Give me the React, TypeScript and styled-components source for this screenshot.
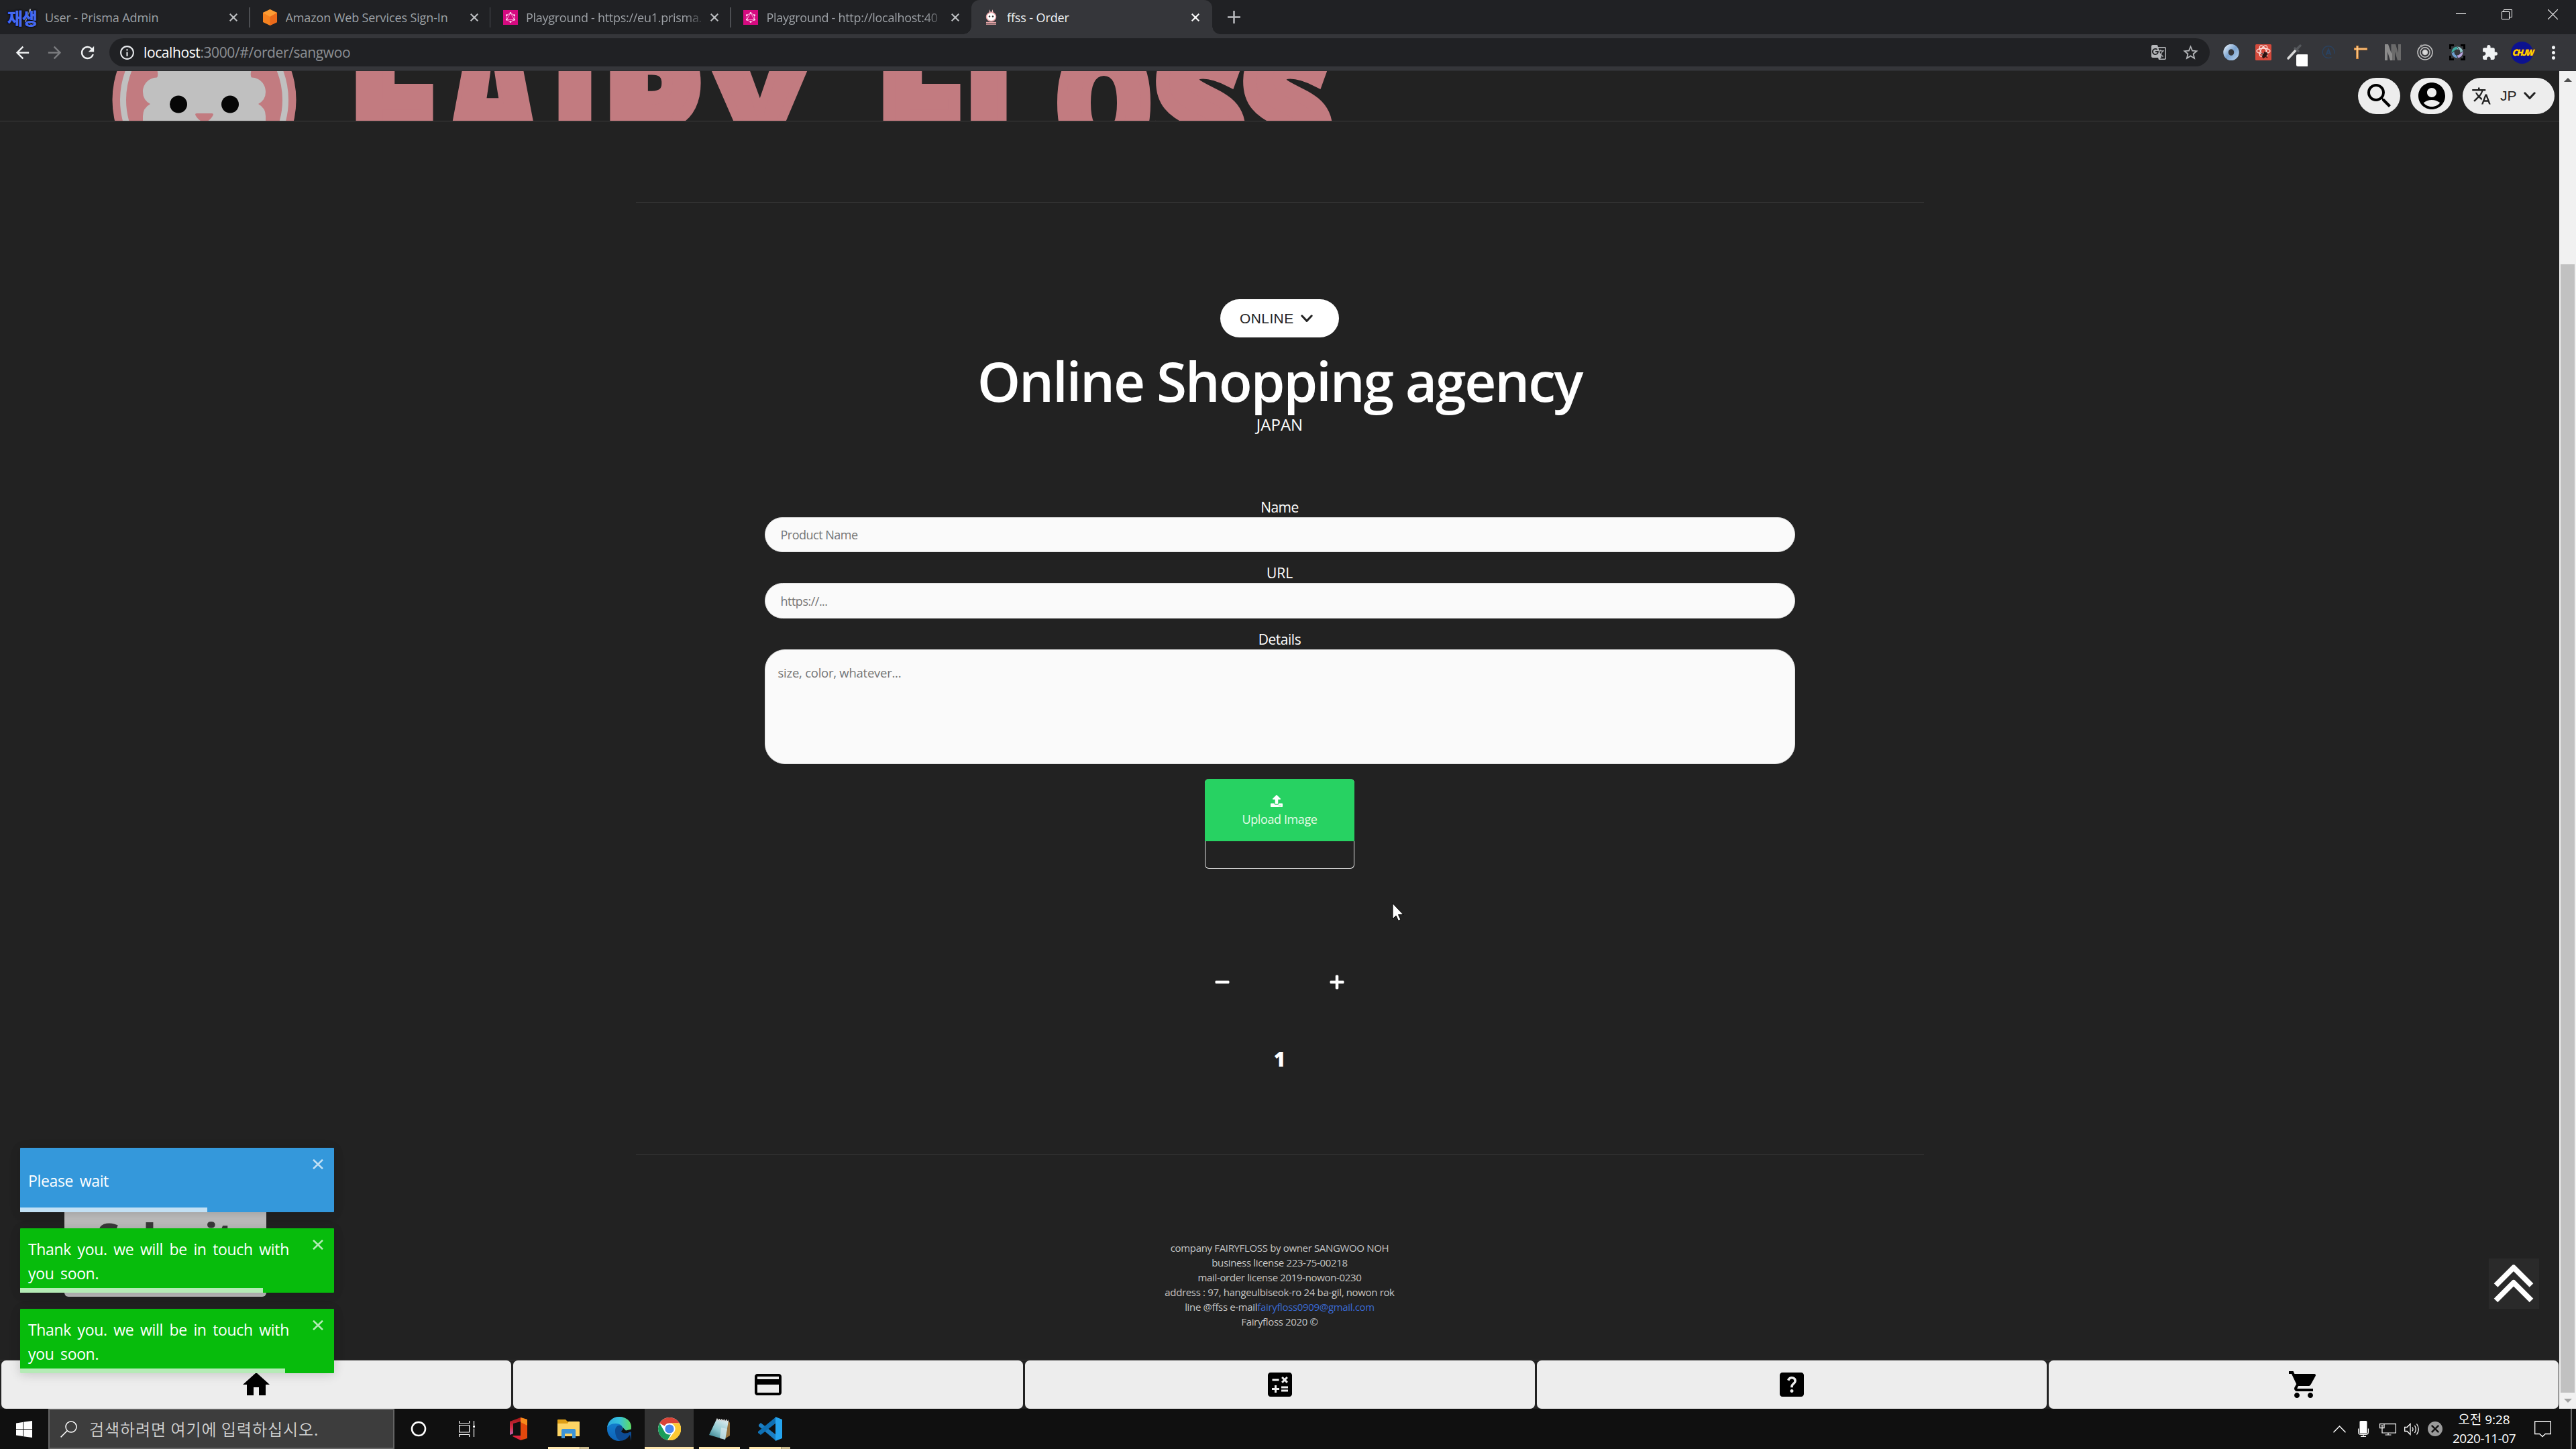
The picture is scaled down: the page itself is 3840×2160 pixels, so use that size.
import React from "react";
import styled, { createGlobalStyle, css } from "styled-components";
import {
  MdAccountCircle,
  MdArrowBack,
  MdArrowForward,
  MdCalculate,
  MdCreditCard,
  MdExtension,
  MdGTranslate,
  MdHelpCenter,
  MdHome,
  MdInfoOutline,
  MdMoreVert,
  MdRefresh,
  MdSearch,
  MdShoppingCart,
  MdStarOutline,
  MdTranslate,
} from "react-icons/md";
import { FaMinus, FaPlus, FaUpload } from "react-icons/fa";
import { SiGraphql } from "react-icons/si";

const ui = `"Open Sans", "Noto Sans CJK KR", sans-serif`;
const arial = `"Liberation Sans", "Noto Sans CJK KR", sans-serif`;

const GlobalStyle = createGlobalStyle`
  *, *::before, *::after { box-sizing: border-box; }
  body { margin: 0; background: #222; font-family: ${ui}; overflow: hidden; }
  svg { display: block; flex: none; }
`;

const Screen = styled.div`
  display: flex;
  flex-direction: column;
  width: 3840px;
  height: 2160px;
  overflow: hidden;
  position: relative;
`;

/* ---------- browser chrome ---------- */
const TabStrip = styled.div`
  display: flex;
  height: 51px;
  padding-left: 14px;
  background: #202124;
`;
const Tab = styled.div<{ $active?: boolean; $divider?: boolean }>`
  display: flex;
  align-items: center;
  width: 358.5px;
  height: 51px;
  padding-left: 18px;
  position: relative;
  font-size: 18px;
  letter-spacing: -0.12px;
  color: #9da1a6;
  &::after {
    content: "";
    position: absolute;
    right: 0;
    top: 11px;
    width: 1.5px;
    height: 30px;
    background: ${(p) => (p.$divider ? "#4c4e52" : "transparent")};
  }
  ${(p) =>
    p.$active &&
    css`
      color: #f1f3f4;
      background: #35363a;
      border-radius: 12px 12px 0 0;
      &::before {
        content: "";
        position: absolute;
        left: -12px;
        right: -12px;
        bottom: 0;
        height: 12px;
        background:
          radial-gradient(circle at 0 0, transparent 11.5px, #35363a 12px) left / 12px 12px no-repeat,
          radial-gradient(circle at 100% 0, transparent 11.5px, #35363a 12px) right / 12px 12px no-repeat;
      }
      &::after {
        display: none;
      }
    `}
`;
const Favicon = styled.div`
  display: flex;
  align-items: center;
  justify-content: center;
  width: 23px;
  height: 24px;
  margin-right: 12px;
`;
const PlayMark = styled.span`
  font: 900 25px/30px "Noto Sans CJK KR", sans-serif;
  color: #4468f0;
  letter-spacing: -1px;
  white-space: nowrap;
  text-shadow: 0 0 2px #000, 0 0 3px #000;
  position: absolute;
  left: -3px;
  top: 11px;
`;
const TabTitle = styled.span<{ $fade?: boolean }>`
  width: 263px;
  overflow: hidden;
  white-space: nowrap;
  line-height: 26px;
  ${(p) =>
    p.$fade &&
    css`
      letter-spacing: -0.28px;
      mask-image: linear-gradient(90deg, #000 90%, rgba(0, 0, 0, 0.15));
    `}
`;
const CloseIcon = styled.svg`
  margin-left: 12px;
`;
const NewTab = styled.div`
  display: flex;
  align-items: center;
  margin-left: 23px;
`;
const WindowControls = styled.div`
  display: flex;
  gap: 53px;
  padding-top: 14px;
  margin-left: auto;
  margin-right: 27px;
`;
const Toolbar = styled.div`
  display: flex;
  align-items: center;
  height: 55px;
  padding: 0 0 0 9px;
  background: #35363a;
  border-bottom: 1px solid #2b2c2f;
`;
const NavButton = styled.div<{ $dim?: boolean }>`
  display: flex;
  align-items: center;
  justify-content: center;
  width: 48.5px;
  font-size: 29px;
  color: ${(p) => (p.$dim ? "#7b7c7f" : "#f1f3f4")};
`;
const Omnibox = styled.div`
  display: flex;
  align-items: center;
  width: 3131px;
  height: 42px;
  margin-left: 8.5px;
  padding: 0 15px 0 14px;
  border-radius: 21px;
  background: #202124;
  color: #e8eaed;
`;
const Url = styled.span`
  margin-left: 12px;
  font-size: 21px;
  line-height: 30px;
  letter-spacing: -0.4px;
  color: #8d9095;
  b { font-weight: 400; color: #fff; }
`;
const OmniActions = styled.div`
  display: flex;
  align-items: center;
  gap: 22px;
  margin-left: auto;
  color: #b5b7ba;
`;
const Extensions = styled.div`
  display: flex;
  align-items: center;
  margin-left: 8px;
`;
const Slot = styled.div<{ $w?: number }>`
  display: flex;
  align-items: center;
  justify-content: center;
  width: ${(p) => p.$w ?? 48.2}px;
  height: 50px;
  position: relative;
`;
const Avatar = styled.div`
  display: flex;
  align-items: center;
  justify-content: center;
  width: 33px;
  height: 33px;
  border-radius: 50%;
  background: #0c1290;
  color: #ffe000;
  font: italic 900 12.5px/12px "Noto Sans CJK KR", sans-serif;
  letter-spacing: -1.6px;
  text-shadow: 0 0 1px #d00;
  white-space: nowrap;
`;

/* ---------- page ---------- */
const Viewport = styled.div`
  display: flex;
  height: 1994px;
  background: #222;
`;
const Page = styled.div`
  display: flex;
  flex-direction: column;
  width: 3815px;
  color: #fff;
`;
const Header = styled.header`
  display: flex;
  justify-content: space-between;
  height: 75px;
  border-bottom: 1px solid #3c3c3c;
  overflow: hidden;
`;
const Logo = styled.svg`
  width: 2100px;
  height: 74px;
`;
const HeaderActions = styled.div`
  display: flex;
  gap: 15px;
  padding: 10px 7px 0 0;
`;
const RoundButton = styled.button`
  display: flex;
  align-items: center;
  justify-content: center;
  width: 63px;
  height: 54px;
  padding: 0;
  border: 0;
  border-radius: 27px;
  background: #ededed;
  color: #000;
  font-size: 48px;
`;
const PillButton = styled.button<{ $w: number; $h: number; $pad: number; $bg: string }>`
  display: flex;
  align-items: center;
  width: ${(p) => p.$w}px;
  height: ${(p) => p.$h}px;
  padding: 0 0 0 ${(p) => p.$pad}px;
  border: 0;
  border-radius: 30px;
  background: ${(p) => p.$bg};
  color: #222;
  font: 21px/30px ${arial};
`;
const PillText = styled.span<{ $left?: number; $ls?: number }>`
  margin: 0 10px 0 ${(p) => p.$left ?? 0}px;
  letter-spacing: ${(p) => p.$ls ?? 0}px;
`;
const Main = styled.main`
  display: flex;
  flex-direction: column;
  align-items: center;
`;
const Rule = styled.hr<{ $top: number }>`
  width: 1920px;
  height: 1px;
  margin: ${(p) => p.$top}px 0 0;
  border: 0;
  background: #3a3a3a;
`;
const PillRow = styled.div`
  margin-top: 144px;
`;
const Title = styled.h1`
  margin: 14px 0 -2px;
  font-size: 82px;
  font-weight: 600;
  line-height: 100px;
  letter-spacing: -2.25px;
`;
const Country = styled.div`
  font-size: 24px;
  line-height: 36px;
`;
const Form = styled.form`
  display: flex;
  flex-direction: column;
  align-items: center;
  width: 1536px;
  margin-top: 90px;
`;
const Label = styled.label<{ $gap?: boolean; $ls?: number }>`
  margin-top: ${(p) => (p.$gap ? 16 : 0)}px;
  font-size: 21px;
  line-height: 30px;
  letter-spacing: ${(p) => p.$ls ?? 0}px;
`;
const field = css`
  width: 1536px;
  border: 1px solid #dedede;
  background: #fafafa;
  font-family: ${ui};
  outline: none;
  resize: none;
  &::placeholder { color: #757575; opacity: 1; }
`;
const Input = styled.input<{ $h: number }>`
  ${field}
  height: ${(p) => p.$h}px;
  padding: 0 23px;
  border-radius: 27px;
  font-size: 18px;
  letter-spacing: -0.5px;
`;
const TextArea = styled.textarea`
  ${field}
  display: block;
  height: 171px;
  padding: 20px 19px;
  border-radius: 30px;
  font-size: 18.5px;
  line-height: 27px;
  letter-spacing: -0.25px;
`;
const UploadBox = styled.div`
  width: 223px;
  height: 134px;
  margin-top: 22px;
  border: 1px solid #e6e6e6;
  border-top: 0;
  border-radius: 6px;
`;
const UploadButton = styled.div`
  display: flex;
  flex-direction: column;
  align-items: center;
  width: 223px;
  height: 93px;
  margin-left: -1px;
  padding-top: 24px;
  border-radius: 6px 6px 0 0;
  background: #27d262;
  color: #e6fbe9;
  font-size: 18px;
  line-height: 26px;
  letter-spacing: -0.4px;
  svg { margin: 0 9px 5px 0; color: #fff; }
`;
const Stepper = styled.div`
  display: flex;
  gap: 147px;
  margin-top: 157px;
  font-size: 24px;
`;
const Quantity = styled.div`
  margin-top: 83px;
  font-size: 30px;
  font-weight: 800;
  line-height: 40px;
`;
const Footer = styled.footer`
  margin-top: 127px;
  font-size: 15px;
  line-height: 22px;
  letter-spacing: -0.34px;
  color: #c6c6c6;
  text-align: center;
  a { color: #3a6ad4; text-decoration: none; }
`;
const BottomNav = styled.nav`
  display: flex;
  gap: 3px;
  height: 73px;
  margin-top: auto;
  padding: 0 1px 0 2px;
  border-top: 1px solid #3c3c3c;
`;
const NavItem = styled.div`
  display: flex;
  flex: 1;
  align-items: center;
  justify-content: center;
  border-radius: 7px;
  background: #ededed;
  color: #000;
  font-size: 48px;
`;
const Scrollbar = styled.div`
  display: flex;
  flex-direction: column;
  align-items: center;
  width: 25px;
  height: 1994px;
  background: #f1f1f1;
`;
const Arrow = styled.div<{ $down?: boolean }>`
  width: 0;
  height: 0;
  margin-top: ${(p) => (p.$down ? 9 : 10)}px;
  border: 6px solid transparent;
  border-top: ${(p) => (p.$down ? "6px solid #a3a3a3" : "0")};
  border-bottom: ${(p) => (p.$down ? "0" : "6px solid #505050")};
`;
const Thumb = styled.div`
  width: 21px;
  height: 1682px;
  margin-top: 272px;
  background: #c1c1c1;
`;

/* ---------- overlays ---------- */
const ToTop = styled.div`
  display: flex;
  position: absolute;
  left: 3710px;
  top: 1876px;
  width: 75px;
  height: 75px;
  background: #2a2a2a;
`;
const SubmitButton = styled.div`
  position: absolute;
  left: 96px;
  top: 1757px;
  width: 301px;
  height: 176px;
  border-radius: 6px;
  background: #bdbdbd;
  color: #3a3a3a;
  font-size: 57px;
  font-weight: 800;
  line-height: 172px;
  letter-spacing: -1px;
  text-align: center;
`;
const Toasts = styled.div`
  display: flex;
  flex-direction: column;
  gap: 24px;
  position: absolute;
  left: 30px;
  top: 1711px;
`;
const Toast = styled.div<{ $bg: string }>`
  display: flex;
  justify-content: space-between;
  align-items: center;
  width: 468px;
  height: 96px;
  padding: 1px 16px 0 12px;
  position: relative;
  border-radius: 1px;
  background: ${(p) => p.$bg};
  box-shadow: 0 1px 15px rgba(0, 0, 0, 0.12), 0 3px 22px rgba(0, 0, 0, 0.06);
  color: #fff;
  font-size: 23px;
  line-height: 36px;
`;
const ToastText = styled.div`
  width: 400px;
  word-spacing: 4px;
  letter-spacing: -0.35px;
`;
const ToastClose = styled.svg`
  align-self: flex-start;
  margin-top: 16px;
`;
const Progress = styled.div`
  position: absolute;
  left: 0;
  bottom: 0;
  height: 7px;
  background: rgba(255, 255, 255, 0.7);
`;
const Cursor = styled.svg`
  position: absolute;
  left: 2075px;
  top: 1345px;
`;

/* ---------- taskbar ---------- */
const Taskbar = styled.div`
  display: flex;
  height: 60px;
  background: #101010;
`;
const SearchBox = styled.div`
  display: flex;
  align-items: center;
  width: 516px;
  height: 60px;
  padding-left: 16px;
  border: 2px solid #646464;
  background: #3d3d3d;
  color: #d2d2d2;
  font: 350 24px/34px "Noto Sans CJK KR", sans-serif;
  letter-spacing: 0.95px;
  span { margin-left: 18px; white-space: nowrap; }
`;
const TaskSlot = styled.div<{ $w?: number; $active?: boolean; $ml?: number }>`
  display: flex;
  align-items: center;
  justify-content: center;
  width: ${(p) => p.$w ?? 75}px;
  height: 60px;
  margin-left: ${(p) => p.$ml ?? 0}px;
  position: relative;
  background: ${(p) => (p.$active ? "linear-gradient(#333, #333) center / 73px 60px no-repeat" : "none")};
`;
const Underline = styled.div<{ $w: number; $split?: boolean }>`
  position: absolute;
  bottom: 0;
  left: ${(p) => (75 - p.$w) / 2}px;
  width: ${(p) => p.$w}px;
  height: 3px;
  background: ${(p) => (p.$split ? "linear-gradient(90deg, #fce5ac 47px, #8f8467 47px, #8f8467 48px, #c9b98d 48px)" : "#fce5ac")};
`;
const Tray = styled.div`
  display: flex;
  margin-left: auto;
  color: #fff;
`;
const Clock = styled.div`
  width: 114px;
  padding-top: 2px;
  text-align: center;
  font-size: 19px;
  line-height: 28px;
`;
const ClockDate = styled.div`
  letter-spacing: -0.5px;
`;
const ShowDesktop = styled.div`
  width: 8px;
  height: 60px;
  border-left: 2px solid #6b6b6b;
`;

const TabClose = ({ color }: { color: string }) => (
  <CloseIcon width="12" height="12" viewBox="0 0 12 12" stroke={color} strokeWidth="2">
    <path d="M.7.7l10.6 10.6M11.3.7L.7 11.3" />
  </CloseIcon>
);
const Chevron = () => (
  <svg width="18" height="12" viewBox="0 0 18 12" fill="none" stroke="#222" strokeWidth="3" strokeLinecap="round" strokeLinejoin="round">
    <path d="M1.8 1.8L9 9.4l7.2-7.6" />
  </svg>
);
const GraphqlIcon = () => (
  <svg width="22" height="22" viewBox="0 0 22 22">
    <rect width="22" height="22" fill="#d60a80" />
    <g transform="translate(3 3)" color="#ffd9ef"><SiGraphql size={16} /></g>
  </svg>
);

/* wordmark letters: glyph, left, width, baseline, size, weight of the outline, family */
const letters: [string, number, number, number, number, number, string][] = [
  ["F", 530, 118, 237, 250, 22, "Inter"],
  ["A", 662, 146, 243, 320, 10, "Inter"],
  ["I", 829, 56, 242, 250, 14, "Inter"],
  ["R", 908, 136, 244, 250, 20, "Inter"],
  ["Y", 1058, 148, 275, 250, 16, "Inter"],
  ["F", 1316, 118, 237, 250, 22, "Inter"],
  ["L", 1445, 112, 246, 250, 18, "Inter"],
  ["O", 1577, 137, 244, 250, 20, "Inter"],
  ["S", 1722, 132, 250, 250, 22, "Noto Sans"],
  ["S", 1852, 132, 250, 250, 22, "Noto Sans"],
];

const BrandLogo = () => (
  <Logo viewBox="0 106 2100 74">
    <circle cx="304.5" cy="149" r="137" fill="#c27b80" />
    <circle cx="304.5" cy="149" r="121" fill="none" stroke="#c0c0c0" strokeWidth="9" />
    <path fill="#c0c0c0" d="M233 100Q237 112 234 115.500C221 116 213 126 213 137Q213 149 224 155Q213 161 213 173V182H396V173Q396 161 385 155Q396 149 396 137C396 126 388 116 375 115.500Q372 112 376 100Z" />
    <ellipse cx="266" cy="155.500" rx="13" ry="13" fill="#060606" />
    <ellipse cx="343" cy="155.500" rx="13" ry="13" fill="#060606" />
    <path fill="#c27b80" d="M293 169H316Q318 169 318 171Q313 181 305 182Q296 181 291 171Q291 169 293 169Z" />
    <g fill="#c27b80" stroke="#c27b80" fontWeight="900">
      {letters.map(([ch, x, w, y, size, outline, family], i) => (
        <text key={i} x={x} y={y} textLength={w} lengthAdjust="spacingAndGlyphs" fontSize={size} strokeWidth={outline} fontFamily={family}>{ch}</text>
      ))}
    </g>
  </Logo>
);

const RabbitIcon = () => (
  <svg width="17" height="23" viewBox="0 0 17 23">
    <path d="M4.500 8L6.500 0l1.500 5h1l1.500-5 2 8z" fill="#f3c6c6" />
    <ellipse cx="8.500" cy="11" rx="7" ry="6.500" fill="#fff" stroke="#e8a5a8" strokeWidth="1.500" />
    <circle cx="6" cy="10.500" r="1.200" fill="#333" /><circle cx="11" cy="10.500" r="1.200" fill="#333" />
    <path d="M1 19.500h15M1 22h15" stroke="#e8a5a8" strokeWidth="1.600" />
  </svg>
);

const ExtensionIcons = () => (
  <Extensions>
    <Slot>
      <svg width="24" height="24" viewBox="0 0 24 24">
        <defs><linearGradient id="ring" x2="1" y2="1"><stop stopColor="#cfe0f2" /><stop offset=".5" stopColor="#7ba3cf" /><stop offset="1" stopColor="#a9c6e6" /></linearGradient></defs>
        <ellipse cx="12" cy="12" rx="8" ry="8.500" fill="none" stroke="url(#ring)" strokeWidth="7.500" />
      </svg>
    </Slot>
    <Slot>
      <svg width="24" height="24" viewBox="0 0 24 24" fill="none">
        <rect width="24" height="24" rx="1.500" fill="#d54a3c" />
        <g stroke="#ffe3df" strokeWidth="1.300">
          <ellipse cx="12" cy="10" rx="10" ry="4" />
          <ellipse cx="12" cy="10" rx="9" ry="4" transform="rotate(60 12 10)" />
          <ellipse cx="12" cy="10" rx="9" ry="4" transform="rotate(120 12 10)" />
        </g>
        <ellipse cx="14" cy="16" rx="3" ry="5" transform="rotate(35 14 16)" fill="#2b1311" />
        <path d="M9 13l9 7M10 19l9-5M14 11l-2 10" stroke="#2b1311" strokeWidth="1.300" />
      </svg>
    </Slot>
    <Slot>
      <svg width="36" height="42" viewBox="0 -3 36 42">
        <path d="M7 27l12-13" stroke="#d9d9d9" strokeWidth="3.500" strokeLinecap="round" />
        <path d="M17 12l5 4M20 13l5-5" stroke="#55585c" strokeWidth="3.500" strokeLinecap="round" />
        <rect x="19" y="21" width="18" height="18" rx="2.500" fill="#fff" />
      </svg>
    </Slot>
    <Slot>
      <svg width="20" height="20" viewBox="0 0 20 20" fill="none" stroke="#2a4260" strokeWidth="1.400">
        <path d="M14.500 17.200A8.800 8.800 0 1 1 18.500 12" />
        <path d="M6.500 14L10 5.500 13.500 14M8 11.500h4" strokeWidth="2" />
      </svg>
    </Slot>
    <Slot>
      <svg width="20" height="22" viewBox="0 0 20 22" stroke="#e8923c">
        <path d="M0 6h20M5 1v20" strokeWidth="3.500" />
        <path d="M1 6h18M5 2v17" stroke="#ffdfae" strokeWidth="1.200" />
      </svg>
    </Slot>
    <Slot>
      <svg width="24" height="24" viewBox="0 0 24 24">
        <path d="M0 0h5l5 14V0h3v24H8L4 11v13H0z" fill="#8b8b8b" />
        <path d="M11 0h5l4 13V0h4v24h-5l-4-13v13h-4z" fill="#6a6a6a" />
      </svg>
    </Slot>
    <Slot>
      <svg width="24" height="24" viewBox="0 0 24 24" fill="none" stroke="#c6c6c6" strokeWidth="1.500">
        <circle cx="12" cy="12" r="11" /><circle cx="12" cy="12" r="7.200" /><circle cx="12" cy="12" r="3.500" fill="#dadada" />
        <circle cx="6.500" cy="2.500" r="2" fill="#999" stroke="none" />
      </svg>
    </Slot>
    <Slot>
      <svg width="24" height="24" viewBox="0 0 24 24" fill="none">
        <path d="M1.500 7V1.500H7M17 1.500h5.500V7M22.500 17v5.500H17M7 22.500H1.500V17" stroke="#000" strokeWidth="3" />
        <path d="M12 5.500A6.500 6.500 0 0 1 18.500 12" stroke="#8fc5c9" strokeWidth="4" />
        <path d="M18.500 12A6.500 6.500 0 0 1 12 18.500" stroke="#b7a5de" strokeWidth="4" />
        <path d="M12 18.500A6.500 6.500 0 0 1 5.500 12" stroke="#6d9fd0" strokeWidth="4" />
        <path d="M5.500 12A6.500 6.500 0 0 1 12 5.500" stroke="#3fa79f" strokeWidth="4" />
        <path d="M12 4l4 6M20 11l-6 4M13 20l-4-6M4 13l5-4" stroke="#35363a" strokeWidth="1" />
      </svg>
    </Slot>
    <Slot><MdExtension size={25} color="#f1f3f4" /></Slot>
    <Slot><Avatar>CHJW</Avatar></Slot>
    <Slot $w={46}><MdMoreVert size={31} color="#f1f3f4" /></Slot>
  </Extensions>
);

const Chrome = () => (
  <>
    <TabStrip>
      <Tab $divider>
        <Favicon>
          <svg width="14" height="26" viewBox="0 0 14 26" fill="none" stroke="#dfe5ee" strokeWidth="1.300"><path d="M8 1L1 19l9 5 3-3z" /></svg>
          <PlayMark>재생</PlayMark>
        </Favicon>
        <TabTitle>User - Prisma Admin</TabTitle><TabClose color="#bfc1c4" />
      </Tab>
      <Tab $divider>
        <Favicon>
          <svg width="23" height="24" viewBox="0 0 23 24">
            <path d="M11.500 0L22 5v14l-10.500 5L1 19V5z" fill="#f58220" />
            <path d="M11.500 0L22 5l-10.500 6L1 5z" fill="#fb9c34" /><path d="M11.500 11L22 5v14l-10.500 5z" fill="#ea6a1b" />
          </svg>
        </Favicon>
        <TabTitle>Amazon Web Services Sign-In</TabTitle><TabClose color="#bfc1c4" />
      </Tab>
      <Tab $divider><Favicon><GraphqlIcon /></Favicon><TabTitle $fade>Playground - https://eu1.prisma.</TabTitle><TabClose color="#bfc1c4" /></Tab>
      <Tab><Favicon><GraphqlIcon /></Favicon><TabTitle $fade>Playground - http://localhost:40</TabTitle><TabClose color="#bfc1c4" /></Tab>
      <Tab $active><Favicon><RabbitIcon /></Favicon><TabTitle>ffss - Order</TabTitle><TabClose color="#fff" /></Tab>
      <NewTab><svg width="19" height="19" viewBox="0 0 19 19" stroke="#b9bbbe" strokeWidth="2.500"><path d="M0 9.500h19M9.500 0v19" /></svg></NewTab>
      <WindowControls>
        <svg width="15" height="15" viewBox="0 0 15 15" stroke="#fff"><path d="M0 6.500h15" /></svg>
        <svg width="16" height="15" viewBox="0 0 16 15" fill="none" stroke="#fff"><path d="M.5 3.500h11v11H.5zM3.500 3V.5h12v11H12" /></svg>
        <svg width="15" height="15" viewBox="0 0 15 15" stroke="#fff" strokeWidth="1.200"><path d="M0 0l15 15M15 0L0 15" /></svg>
      </WindowControls>
    </TabStrip>
    <Toolbar>
      <NavButton><MdArrowBack /></NavButton>
      <NavButton $dim><MdArrowForward /></NavButton>
      <NavButton><MdRefresh /></NavButton>
      <Omnibox>
        <MdInfoOutline size={25} />
        <Url><b>localhost</b>:3000/#/order/sangwoo</Url>
        <OmniActions><MdGTranslate size={24} /><MdStarOutline size={27} /></OmniActions>
      </Omnibox>
      <ExtensionIcons />
    </Toolbar>
  </>
);

const ToastItem = ({ bg, text, progress }: { bg: string; text: string; progress: number }) => (
  <Toast $bg={bg}>
    <ToastText>{text}</ToastText>
    <ToastClose width="16" height="15" viewBox="0 0 16 15" stroke="#fff" strokeOpacity=".7" strokeWidth="2.600">
      <path d="M1 .8l14 13.400M15 .8L1 14.200" />
    </ToastClose>
    <Progress style={{ width: progress }} />
  </Toast>
);

const TaskIcons = () => (
  <>
    <TaskSlot $w={72}><svg width="24" height="24" viewBox="0 0 24 24"><circle cx="12" cy="12" r="10" fill="none" stroke="#fff" strokeWidth="2.600" /></svg></TaskSlot>
    <TaskSlot $w={72}>
      <svg width="25" height="24" viewBox="0 0 25 24" fill="none" stroke="#fff" strokeWidth="1.200">
        <path d="M.6 0v3.500h15V0M.6 6.500h15v10.500h-15zM.6 24v-3.500h15V24M22.500 0v6M22.500 11.500V24" /><path d="M21 7h3v3h-3z" fill="#fff" stroke="none" />
      </svg>
    </TaskSlot>
    <TaskSlot $ml={3}>
      <svg width="28" height="34" viewBox="0 0 28 34">
        <defs><linearGradient id="of" x2="0" y2="1"><stop stopColor="#a01414" /><stop offset=".6" stopColor="#d8304a" /><stop offset="1" stopColor="#b765b0" /></linearGradient></defs>
        <path d="M17 0L1 6v20l5-2V9l11-3z" fill="url(#of)" /><path d="M17 0l10 3v28l-10 3V6z" fill="#e2480c" /><path d="M17 0l10 3v9L17 7z" fill="#f58a1b" />
        <path d="M6 27h11v7L5 28z" fill="#e0233e" />
      </svg>
    </TaskSlot>
    <TaskSlot>
      <svg width="33" height="28" viewBox="0 0 33 28">
        <path d="M0 1q0-1 1-1h11l3 3h17v6H0z" fill="#dd9e16" /><path d="M0 6h15l2-3h15q1 0 1 1v21H0z" fill="#fdd464" />
        <path d="M6 28V16q0-2 2-2h17q2 0 2 2v12h-5v-7H11v7z" fill="#3c94d8" />
      </svg>
      <Underline $w={61} $split />
    </TaskSlot>
    <TaskSlot>
      <svg width="36" height="36" viewBox="0 0 36 36">
        <defs>
          <linearGradient id="e1"><stop stopColor="#2aa7de" /><stop offset=".5" stopColor="#36c1dd" /><stop offset="1" stopColor="#5fdc60" /></linearGradient>
          <linearGradient id="e2" x2="0" y2="1"><stop stopColor="#1585d3" /><stop offset="1" stopColor="#0e63b8" /></linearGradient>
        </defs>
        <circle cx="18" cy="18" r="18" fill="url(#e2)" />
        <path d="M0 17C1 6 9 0 18 0c11 0 18 7 18 15 0 6-4 9-9 9-4 0-6-1-6-3 2-1 2-3 2-4 0-4-4-7-10-7C6 10 1 13 0 17z" fill="url(#e1)" />
        <path d="M12 21c0-6 4-9 8-8 2 1 3 2 3 4s-1 3-2 4c0 2 3 3 6 3 3 0 5-1 7-2l2 1v13H20c-5-2-8-8-8-15z" fill="#0d4b93" />
        <path d="M21 21c0 2 3 3.500 6 3.500 3 0 5-1 7-2l2 0v-4l-8 2-5-5c1 3 0 4-2 5.500zM34 27c-4 6-9 9-16 9h18z" fill="#101010" />
      </svg>
    </TaskSlot>
    <TaskSlot $active>
      <svg width="34" height="34" viewBox="0 0 34 34">
        <circle cx="17" cy="17" r="17" fill="#fff" />
        <path d="M17 0a17 17 0 0 1 14.700 8.500H17a8.500 8.500 0 0 0-7.400 4.300L2.300 8.500A17 17 0 0 1 17 0z" fill="#db4437" />
        <path d="M2.300 8.500l7.300 12.700A8.500 8.500 0 0 0 17 25.500l2-.2-5 8.400A17 17 0 0 1 2.300 8.500z" fill="#1a9d5a" />
        <path d="M31.700 8.500A17 17 0 0 1 14.500 34l9.900-12.800A8.500 8.500 0 0 0 17 8.500z" fill="#fcc934" />
        <circle cx="17" cy="17" r="8.300" fill="#fff" /><circle cx="17" cy="17" r="6.600" fill="#4a86ee" />
      </svg>
      <Underline $w={73} />
    </TaskSlot>
    <TaskSlot>
      <svg width="33" height="33" viewBox="0 0 33 33">
        <defs><linearGradient id="np" x1=".8" y1="0" x2=".2" y2="1"><stop stopColor="#dcebed" /><stop offset=".55" stopColor="#8cc7cf" /><stop offset="1" stopColor="#34808c" /></linearGradient></defs>
        <path d="M29 3l3 4v19l-8 5z" fill="#94703a" />
        <path d="M12 2l18 2-5 28L1 25z" fill="url(#np)" /><path d="M19 14l9 2-3 16-8-2z" fill="#e3edee" opacity=".6" />
        <path d="M12 2l18 2" stroke="#cfcfcf" strokeWidth="3" strokeDasharray="2 1.500" />
      </svg>
      <Underline $w={61} />
    </TaskSlot>
    <TaskSlot>
      <svg width="36" height="36" viewBox="0 0 36 36">
        <path d="M1 12l3-3L27 27v9L1 14z" fill="#1b7fc4" /><path d="M27 0v9L4 27l-4-3v-2z" fill="#0f70b3" />
        <path d="M26 0l10 4v28l-10 4z" fill="#25a4ee" />
      </svg>
      <Underline $w={61} $split />
    </TaskSlot>
  </>
);

const TrayIcons = () => (
  <Tray>
    <TaskSlot $w={36}><svg width="19" height="11" viewBox="0 0 19 11" fill="none" stroke="#fff" strokeWidth="1.400"><path d="M.5 10.200L9.500 1l9 9.200" /></svg></TaskSlot>
    <TaskSlot $w={36}><svg width="16" height="24" viewBox="0 0 16 24" fill="none" stroke="#fff" strokeWidth="1.200"><rect x="2.500" y="0" width="11" height="19" rx="1.500" fill="#fff" stroke="none" /><path d="M.6 11.500v5q0 4 4 4h6.800q4 0 4-4v-5M8 20.500v3M4 23.400h8" /></svg></TaskSlot>
    <TaskSlot $w={36}><svg width="25" height="19" viewBox="0 0 25 19" fill="none" stroke="#fff" strokeWidth="1.200"><path d="M7 1.600h17.400v13.400H4V9M13 15v3M8.500 18h9M.6 1.600h6.400v6H.6zM2.500 4h3M4 4v5" /></svg></TaskSlot>
    <TaskSlot $w={36}><svg width="23" height="19" viewBox="0 0 23 19" fill="none" stroke="#fff" strokeWidth="1.300"><path d="M.7 6.500h3.500L9 1.500v16l-4.800-5H.7zM12 6.500q2 3 0 6M15.500 4q3.500 5.500 0 11M18.500 1.500q5.500 8 0 16" /></svg></TaskSlot>
    <TaskSlot $w={33}><svg width="22" height="22" viewBox="0 0 22 22"><circle cx="11" cy="11" r="11" fill="#9a9a9a" /><path d="M5.800 5.800l10.400 10.400M16.200 5.800L5.800 16.200" stroke="#101010" strokeWidth="2.400" /></svg></TaskSlot>
    <Clock><div>오전 9:28</div><ClockDate>2020-11-07</ClockDate></Clock>
    <TaskSlot $w={60}><svg width="25" height="25" viewBox="0 0 25 25" fill="none" stroke="#fff" strokeWidth="1.300"><path d="M.7 1h23.600v18.500h-8L12 23.500l-4.300-4H.7z" /></svg></TaskSlot>
    <TaskSlot $w={12} />
    <ShowDesktop />
  </Tray>
);

export default function App() {
  return (
    <>
      <GlobalStyle />
      <Screen>
        <Chrome />
        <Viewport>
          <Page>
            <Header>
              <BrandLogo />
              <HeaderActions>
                <RoundButton><MdSearch /></RoundButton>
                <RoundButton><MdAccountCircle /></RoundButton>
                <PillButton $w={137} $h={54} $pad={13} $bg="#ededed"><MdTranslate size={30} /><PillText $left={13}>JP</PillText><Chevron /></PillButton>
              </HeaderActions>
            </Header>
            <Main>
              <Rule $top={120} />
              <PillRow><PillButton $w={177} $h={57} $pad={29} $bg="#fff"><PillText $ls={0.4}>ONLINE</PillText><Chevron /></PillButton></PillRow>
              <Title>Online Shopping agency</Title>
              <Country>JAPAN</Country>
              <Form>
                <Label $ls={-0.5}>Name</Label>
                <Input $h={52} placeholder="Product Name" />
                <Label $gap>URL</Label>
                <Input $h={53} placeholder="https://..." />
                <Label $gap $ls={-0.5}>Details</Label>
                <TextArea placeholder="size, color, whatever..." />
                <UploadBox><UploadButton><FaUpload size={18} />Upload Image</UploadButton></UploadBox>
              </Form>
              <Stepper><FaMinus /><FaPlus /></Stepper>
              <Quantity>1</Quantity>
              <Rule $top={122} />
            </Main>
            <Footer>
              <div>company FAIRYFLOSS by owner SANGWOO NOH</div>
              <div>business license 223-75-00218</div>
              <div>mail-order license 2019-nowon-0230</div>
              <div>address : 97, hangeulbiseok-ro 24 ba-gil, nowon rok</div>
              <div>line @ffss e-mail<a>fairyfloss0909@gmail.com</a></div>
              <div>Fairyfloss 2020 ©</div>
            </Footer>
            <BottomNav>
              <NavItem><MdHome /></NavItem>
              <NavItem><MdCreditCard /></NavItem>
              <NavItem><MdCalculate /></NavItem>
              <NavItem><MdHelpCenter /></NavItem>
              <NavItem><MdShoppingCart /></NavItem>
            </BottomNav>
          </Page>
          <Scrollbar><Arrow /><Thumb /><Arrow $down /></Scrollbar>
        </Viewport>
        <Taskbar>
          <TaskSlot $w={72}>
            <svg width="24" height="25" viewBox="0 0 24 25" fill="#fff"><path d="M0 3.500L10 2v10H0zM11 1.800L24 0v12H11zM0 13h10v10L0 21.500zM11 13h13v12l-13-1.800z" /></svg>
          </TaskSlot>
          <SearchBox>
            <svg width="25" height="25" viewBox="0 0 25 25" fill="none" stroke="#fff" strokeWidth="1.500"><circle cx="16" cy="9" r="8" /><path d="M10.200 14.800L.6 24.400" /></svg>
            <span>검색하려면 여기에 입력하십시오.</span>
          </SearchBox>
          <TaskIcons />
          <TrayIcons />
        </Taskbar>
        <ToTop>
          <svg width="75" height="75" viewBox="0 0 75 75" fill="none" stroke="#fff" strokeWidth="8" strokeLinejoin="round">
            <path d="M10.500 40L37 13.500 63.500 40M10.500 62.500L37 36l26.500 26.500" />
          </svg>
        </ToTop>
        <SubmitButton>Submit</SubmitButton>
        <Toasts>
          <ToastItem bg="#3498db" text="Please wait" progress={279} />
          <ToastItem bg="#07bc0c" text="Thank you. we will be in touch with you soon." progress={362} />
          <ToastItem bg="#07bc0c" text="Thank you. we will be in touch with you soon." progress={395} />
        </Toasts>
        <Cursor width="20" height="30" viewBox="0 0 20 30"><path d="M1 1.500v23.500l5-5 3.500 7.500 3.500-1.500-3.500-7.500h7.500z" fill="#fff" stroke="#000" /></Cursor>
      </Screen>
    </>
  );
}
